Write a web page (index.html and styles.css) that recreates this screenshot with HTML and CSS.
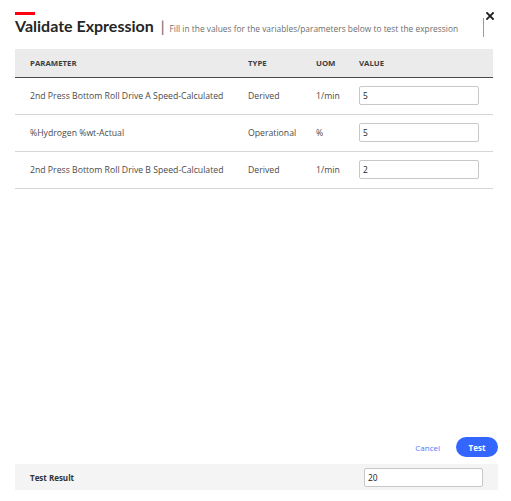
FILE: index.html
```html
<!DOCTYPE html>
<html>
<head>
<meta charset="utf-8">
<link rel="stylesheet" href="styles.css">
</head>
<body>
<div class="dialog">
  <header class="head">
    <div class="title-block">
      <div class="accent"></div>
      <div class="title-line">
        <h1 class="title">Validate Expression</h1>
        <span class="pipe">|</span>
        <span class="subtitle">Fill in the values for the variables/parameters below to test the expression</span>
      </div>
    </div>
    <div class="head-right">
      <div class="divider"></div>
      <button class="close" aria-label="Close">
        <svg width="8" height="8" viewBox="0 0 8 8"><path d="M1 1 L7 7 M7 1 L1 7" stroke="#1f1f1f" stroke-width="1.8" stroke-linecap="square"/></svg>
      </button>
    </div>
  </header>

  <table class="params">
    <thead>
      <tr>
        <th class="c-param">PARAMETER</th>
        <th class="c-type">TYPE</th>
        <th class="c-uom">UOM</th>
        <th class="c-val">VALUE</th>
      </tr>
    </thead>
    <tbody>
      <tr>
        <td class="c-param">2nd Press Bottom Roll Drive A Speed-Calculated</td>
        <td class="c-type">Derived</td>
        <td class="c-uom">1/min</td>
        <td class="c-val"><input class="field" value="5"></td>
      </tr>
      <tr>
        <td class="c-param">%Hydrogen %wt-Actual</td>
        <td class="c-type">Operational</td>
        <td class="c-uom">%</td>
        <td class="c-val"><input class="field" value="5"></td>
      </tr>
      <tr>
        <td class="c-param">2nd Press Bottom Roll Drive B Speed-Calculated</td>
        <td class="c-type">Derived</td>
        <td class="c-uom">1/min</td>
        <td class="c-val"><input class="field" value="2"></td>
      </tr>
    </tbody>
  </table>

  <footer class="foot">
    <div class="actions">
      <button class="btn-cancel">Cancel</button>
      <button class="btn-test">Test</button>
    </div>
    <div class="result">
      <span class="result-label">Test Result</span>
      <input class="field result-field" value="20">
    </div>
  </footer>
</div>
</body>
</html>
```

FILE: styles.css
```css
* { box-sizing: border-box; }
html, body { margin: 0; padding: 0; background: #fff; }
body { font-family: "Open Sans", Lato, sans-serif; color: #3a3a3a; }

.dialog {
  display: flex;
  flex-direction: column;
  min-height: 100vh;
  padding: 12px 13px 11px 15px;
}

.head {
  display: flex;
  justify-content: space-between;
  align-items: flex-start;
  width: 479px;
  height: 37px;
}
.accent { width: 20px; height: 3px; background: #ff000f; }
.title-line { display: flex; align-items: baseline; margin-top: 2px; }
.title { margin: 0; font-family: Lato, sans-serif; font-size: 16px; font-weight: 700; color: #262626; line-height: 18px; }
.pipe { font-family: Lato, sans-serif; font-size: 15px; color: #666; margin: 0 5px 0 7px; font-weight: 400; }
.subtitle { font-size: 8.4px; color: #6e6e6e; }

.head-right { display: flex; align-items: flex-start; }
.divider { width: 1px; height: 19px; background: #9a9a9a; margin-top: 6px; }
.close {
  border: 0; background: none; padding: 0;
  width: 8px; height: 8px; margin-left: 2px; margin-top: 0;
  display: flex;
}

.params {
  width: 478px;
  border-collapse: collapse;
  table-layout: fixed;
  font-size: 8.7px;
}
.params th {
  background: #ebebeb;
  height: 28px;
  text-align: left;
  font-weight: 700;
  font-size: 7.8px;
  color: #3d3d3d;
  border-bottom: 1px solid #4a4a4a;
  padding: 0;
}
.params td {
  height: 37px;
  border-bottom: 1px solid #d6d6d6;
  color: #4a4a4a;
  padding: 0;
}
.c-param { width: 233px; padding-left: 15px !important; }
.c-type { width: 68px; }
.c-uom { width: 42px; }
.c-val { width: 135px; padding-left: 1px !important; }

.field {
  display: block;
  width: 120px;
  height: 19px;
  border: 1px solid #c8c8c8;
  border-radius: 2px;
  padding: 0 0 0 3px;
  font-family: "Open Sans", Lato, sans-serif;
  font-size: 8.4px;
  color: #222;
  background: #fff;
}

.foot { margin-top: auto; }
.actions {
  display: flex;
  justify-content: flex-end;
  align-items: center;
  gap: 16px;
}
.btn-cancel {
  border: 0; background: none; padding: 0;
  font-family: "Open Sans", Lato, sans-serif;
  font-size: 8px; color: #4a78ff;
}
.btn-test {
  border: 0;
  background: #3366ff;
  color: #fff;
  font-family: "Open Sans", Lato, sans-serif;
  font-size: 8px; font-weight: 700;
  width: 42px; height: 20px;
  border-radius: 10px;
}
.result {
  display: flex;
  align-items: center;
  justify-content: space-between;
  width: 483px;
  height: 26px;
  margin-top: 7px;
  background: #f4f4f4;
  padding: 0 15px 0 15px;
}
.result-label { font-size: 8px; font-weight: 700; color: #333; }
.result-field { width: 119px; height: 19px; }
```
